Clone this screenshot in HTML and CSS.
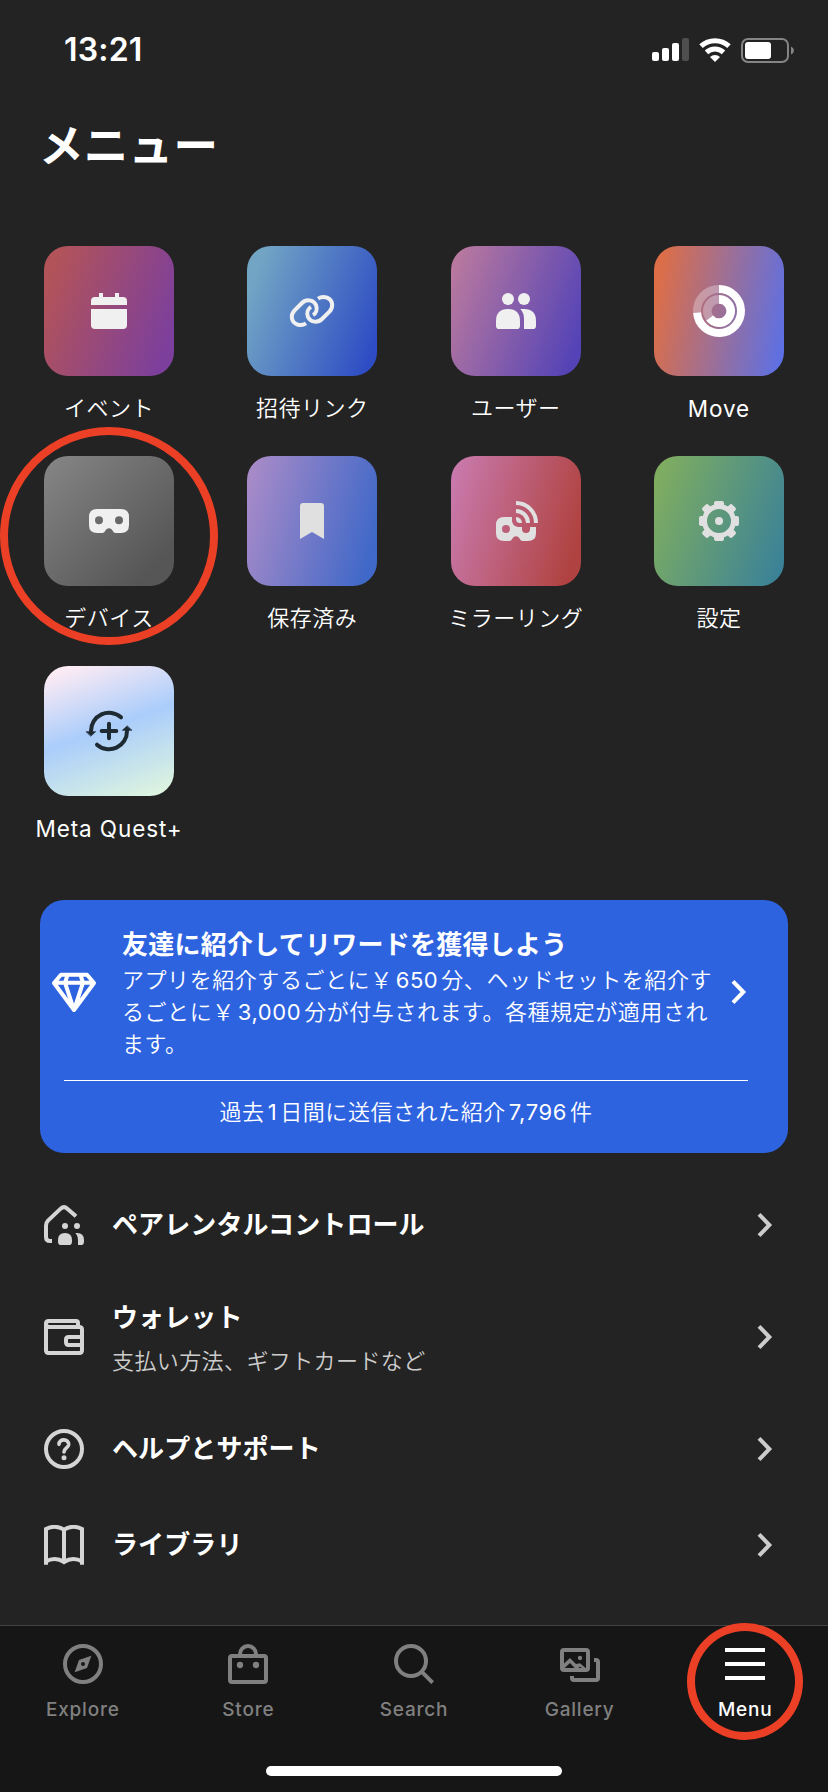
FILE: index.html
```html
<!DOCTYPE html>
<html lang="ja">
<head>
<meta charset="utf-8">
<title>メニュー</title>
<link rel="stylesheet" href="styles.css">
</head>
<body>
<div class="screen">
  <header class="status">
    <span class="time">13:21</span>
    <div class="status-icons">
      <svg width="37" height="24" viewBox="0 0 37 24" fill="#fff"><rect y="14" width="7" height="9" rx="2"/><rect x="10" y="10" width="7" height="13" rx="2"/><rect x="20" y="5" width="7" height="18" rx="2"/><rect x="30" width="7" height="23" rx="2" fill="#4f4f4f"/></svg>
      <svg width="32" height="24" viewBox="0 0 32 24" fill="none" stroke="#fff" stroke-width="5"><path d="M2 8.2A20.500 20.500 0 0 1 30 8.200"/><path d="M7.500 14.300A12.500 12.500 0 0 1 24.500 14.300"/><path d="M16 24L11 19A7.500 7.500 0 0 1 21 19Z" fill="#fff" stroke="none"/></svg>
      <svg width="53" height="25" viewBox="0 0 53 25"><rect x="1" y="1" width="46" height="23" rx="6" fill="none" stroke="#858585" stroke-width="2"/><rect x="4" y="4" width="26" height="17" rx="3" fill="#fff"/><path d="M50 8.500Q53 10 53 12.500T50 16.500Z" fill="#858585"/></svg>
    </div>
  </header>

  <h1 class="title">メニュー</h1>

  <main class="grid">
    <div class="cell"><div class="tile events"><svg viewBox="-90 -90 180 180" fill="#f0f0f0"><path d="M-54-18V-30Q-54-42-42-42H-30V-54H-18V-42H18V-54H30V-42H42Q54-42 54-30V-18ZM-54-6H54V42Q54 54 42 54H-42Q-54 54-54 42Z"/></svg></div><span class="label">イベント</span></div>
    <div class="cell"><div class="tile invite"><svg viewBox="-90 -90 180 180" fill="none" stroke="#f0f0f0" stroke-width="12"><path d="M18-37C27-43 37-43 45-40C63-33 65-12 53 1L30 24C18 36-4 35-12 18C-17 5-12-7-3-12"/><path d="M18-37C27-43 37-43 45-40C63-33 65-12 53 1L30 24C18 36-4 35-12 18C-17 5-12-7-3-12" transform="rotate(180)"/></svg></div><span class="label">招待リンク</span></div>
    <div class="cell"><div class="tile users"><svg viewBox="-90 -90 180 180" fill="#f0f0f0"><circle cx="-24" cy="-36" r="18"/><circle cx="24" cy="-36" r="18"/><path d="M-60 30Q-60-6-24-6T12 30V44Q12 54 2 54H-50Q-60 54-60 44ZM13-6H24Q60-6 60 30V44Q60 54 50 54H24V24Q24 6 13-6Z"/></svg></div><span class="label">ユーザー</span></div>
    <div class="cell"><div class="tile move"><svg viewBox="-90 -90 180 180" fill="none" stroke="#fff"><g stroke-opacity=".3"><path stroke-width="24" d="M0-66A66 66 0 0 0-65.800 5"/><path stroke-width="26" d="M0-35A35 35 0 0 0-28 21"/></g><path stroke-width="24" d="M0-66A66 66 0 1 1-65.800 5"/><path stroke-width="26" d="M0-35A35 35 0 1 1-28 21"/></svg></div><span class="label latin">Move</span></div>

    <div class="cell"><div class="tile devices"><svg viewBox="-90 -90 180 180" fill="#f0f0f0" fill-rule="evenodd"><path d="M-36-36H36Q60-36 60-12V12Q60 36 36 36H20C10 36 12 22 0 22S-10 36-20 36H-36Q-60 36-60 12V-12Q-60-36-36-36ZM-42-2a12 12 0 1 0 24 0a12 12 0 1 0-24 0ZM18-2a12 12 0 1 0 24 0a12 12 0 1 0-24 0Z"/></svg></div><span class="label">デバイス</span></div>
    <div class="cell"><div class="tile saved"><svg viewBox="-90 -90 180 180" fill="#e0e0e0"><path d="M-36-44Q-36-54-26-54H26Q36-54 36-44V54L0 33L-36 54Z"/></svg></div><span class="label">保存済み</span></div>
    <div class="cell"><div class="tile mirror"><svg viewBox="-90 -90 180 180" fill="#e0e0e0" fill-rule="evenodd"><path d="M-36-12H-12V0Q-10 16 6 18H18V24a12 12 0 0 0 24 0V18H60V36Q60 60 36 60H20C10 60 12 46 0 46S-10 60-20 60H-36Q-60 60-60 36V12Q-60-12-36-12ZM-42 24a12 12 0 1 0 24 0a12 12 0 1 0-24 0Z"/><path d="M0-12A18 18 0 0 1 18 6H9Q1 4 0-4Z"/><path d="M0-54A60 60 0 0 1 60 6M0-30A36 36 0 0 1 36 6" fill="none" stroke="#e0e0e0" stroke-width="12"/></svg></div><span class="label">ミラーリング</span></div>
    <div class="cell"><div class="tile settings"><svg viewBox="-90 -90 180 180" fill="#e0e0e0"><circle r="43.500" fill="none" stroke="#e0e0e0" stroke-width="15"/><circle r="12"/><path d="M-15-44V-54Q-15-60-9-60H9Q15-60 15-54V-44ZM-15 44V54Q-15 60-9 60H9Q15 60 15 54V44ZM-44-15H-54Q-60-15-60-9V9Q-60 15-54 15H-44ZM44-15H54Q60-15 60-9V9Q60 15 54 15H44Z"/><path transform="rotate(45)" d="M-12-44V-57Q-12-63-6-63H6Q12-63 12-57V-44ZM-12 44V57Q-12 63-6 63H6Q12 63 12 57V44ZM-44-12H-57Q-63-12-63-6V6Q-63 12-57 12H-44ZM44-12H57Q63-12 63-6V6Q63 12 57 12H44Z"/></svg></div><span class="label">設定</span></div>

    <div class="cell"><div class="tile quest"><svg viewBox="-90 -90 180 180" fill="none" stroke="#1f2b33" stroke-width="12" stroke-linecap="round"><path d="M0-22V22M-22 0H22M-54 0A54 54 0 0 1 36-41M54 0A54 54 0 0 1-36 41"/><path d="M-68 2H-40L-54 15ZM68-2H40L54-15Z" fill="#1f2b33" stroke-width="2"/></svg></div><span class="label latin">Meta Quest+</span></div>
  </main>

  <section class="banner">
    <div class="banner-top">
      <svg class="gem" viewBox="90 265 144 140" fill="none" stroke="#fff" stroke-width="12" stroke-linejoin="round"><path d="M123 282H201L222 307L162 388L102 307ZM102 306H222M143 282L135 306L162 388L189 306L181 282"/></svg>
      <div class="banner-text">
        <h2>友達に紹介してリワードを獲得しよう</h2>
        <p>アプリを紹介するごとに￥<span class="num">650</span>分、ヘッドセットを紹介す<br>るごとに￥<span class="num">3,000</span>分が付与されます。各種規定が適用され<br>ます。</p>
      </div>
      <svg class="chev" viewBox="0 0 54 84" fill="none" stroke="#fff" stroke-width="12"><path d="M9 10L40 42L9 74"/></svg>
    </div>
    <div class="banner-foot">過去<span class="num">1</span>日間に送信された紹介<span class="num">7,796</span>件</div>
  </section>

  <ul class="list">
    <li>
      <svg class="ico" viewBox="0 0 120 120" fill="none" stroke="#d5d5d5" stroke-width="12"><path d="M24 108H18Q6 108 6 96V62Q6 53 12 47L50 11Q60 2 70 11L96 34"/><g fill="#d5d5d5" stroke="none"><circle cx="63" cy="63" r="9"/><circle cx="99" cy="63" r="9"/><path d="M42 105Q42 84 63 84T84 105V110Q84 120 74 120H52Q42 120 42 110ZM94 84H99Q120 84 120 105V110Q120 120 110 120H102V107Q102 92 94 84Z"/></g></svg>
      <div class="list-text"><strong>ペアレンタルコントロール</strong></div>
      <svg class="chev" viewBox="0 0 54 84" fill="none" stroke="#ccc" stroke-width="12"><path d="M9 10L40 42L9 74"/></svg>
    </li>
    <li class="tall">
      <svg class="ico" viewBox="0 0 120 120" fill="none" stroke="#d5d5d5" stroke-width="12"><path d="M102 24V18Q102 12 96 12H14Q6 12 6 20V100Q6 108 14 108H106Q114 108 114 100V38Q114 30 106 30H16Q6 30 6 20M114 60H74Q66 60 66 68V76Q66 84 74 84H114"/></svg>
      <div class="list-text"><strong>ウォレット</strong><small>支払い方法、ギフトカードなど</small></div>
      <svg class="chev" viewBox="0 0 54 84" fill="none" stroke="#ccc" stroke-width="12"><path d="M9 10L40 42L9 74"/></svg>
    </li>
    <li>
      <svg class="ico" viewBox="0 0 120 120" fill="none" stroke="#d5d5d5" stroke-width="12"><circle cx="60" cy="60" r="54"/><path stroke-width="11" stroke-linecap="round" d="M45 46C45 28 75 28 74 47C73 57 60 57 60 69"/><circle cx="60" cy="86" r="7.500" fill="#d5d5d5" stroke="none"/></svg>
      <div class="list-text"><strong>ヘルプとサポート</strong></div>
      <svg class="chev" viewBox="0 0 54 84" fill="none" stroke="#ccc" stroke-width="12"><path d="M9 10L40 42L9 74"/></svg>
    </li>
    <li>
      <svg class="ico" viewBox="0 0 120 120" fill="none" stroke="#d5d5d5" stroke-width="12"><path d="M6 119V12Q34-2 60 14Q86-2 114 12V119M60 14V112M4 110Q34 94 60 111Q86 94 116 110"/></svg>
      <div class="list-text"><strong>ライブラリ</strong></div>
      <svg class="chev" viewBox="0 0 54 84" fill="none" stroke="#ccc" stroke-width="12"><path d="M9 10L40 42L9 74"/></svg>
    </li>
  </ul>

  <footer class="dock">
    <nav class="tabs">
      <div class="tab"><svg viewBox="0 0 120 120" fill="none" stroke="currentColor" stroke-width="12"><circle cx="60" cy="60" r="54"/><path fill="currentColor" fill-rule="evenodd" stroke="none" d="M85 35L72 72L35 85L48 48ZM54 60a6 6 0 1 0 12 0a6 6 0 1 0-12 0Z"/></svg><span>Explore</span></div>
      <div class="tab"><svg viewBox="0 0 120 120" fill="none" stroke="currentColor" stroke-width="12"><rect x="6" y="36" width="108" height="78" rx="6"/><path d="M36 34V30A24 24 0 0 1 84 30V34"/><g fill="currentColor" stroke="none"><circle cx="36" cy="63" r="9.500"/><circle cx="84" cy="63" r="9.500"/></g></svg><span>Store</span></div>
      <div class="tab"><svg viewBox="0 0 120 120" fill="none" stroke="currentColor" stroke-width="12"><circle cx="51" cy="51" r="45"/><path d="M82 82L116 116"/></svg><span>Search</span></div>
      <div class="tab"><svg viewBox="0 0 120 120" fill="none" stroke="currentColor" stroke-width="12"><rect x="6" y="18" width="78" height="60" rx="6"/><path d="M102 48H108Q114 48 114 54V102Q114 108 108 108H42Q36 108 36 102V96"/><g fill="currentColor" stroke="none"><circle cx="60" cy="42" r="6.500"/><path d="M8 62L30 42L48 60L60 58L84 78H72L61 68L54 72H44L30 57L14 72H8Z"/></g></svg><span>Gallery</span></div>
      <div class="tab active"><svg viewBox="0 0 120 120" fill="none" stroke="currentColor" stroke-width="12"><path d="M0 18H120M0 60H120M0 102H120"/></svg><span>Menu</span></div>
    </nav>
    <div class="home"></div>
  </footer>

  <div class="ring ring-device"></div>
  <div class="ring ring-menu"></div>
</div>
</body>
</html>
```
FILE: styles.css
```css
* { box-sizing: border-box; }
body {
  margin: 0;
  background: #232323;
  color: #fff;
  font-family: Inter, "Noto Sans CJK JP", sans-serif;
}
h1, h2, p, ul { margin: 0; padding: 0; }
svg { display: block; flex: none; }

.screen {
  position: relative;
  display: flex;
  flex-direction: column;
  width: 828px;
  height: 1792px;
  overflow: hidden;
  background: #232323;
}

.status {
  display: flex;
  justify-content: space-between;
  align-items: center;
  height: 98px;
  padding: 2px 34px 0 64px;
}
.time { font-size: 32px; font-weight: 600; line-height: 40px; letter-spacing: 0.200px; }
.status-icons { display: flex; align-items: center; gap: 10px; }

.title {
  height: 148px;
  padding: 18px 0 0 39px;
  font-size: 44.500px;
  line-height: 60px;
  font-weight: 700;
  letter-spacing: 0.300px;
}

.grid {
  display: grid;
  grid-template-columns: repeat(4, 130px);
  grid-auto-rows: 210px;
  justify-content: space-between;
  width: 740px;
  height: 654px;
  margin-left: 44px;
}
.cell { display: flex; flex-direction: column; align-items: center; }
.tile {
  display: flex;
  align-items: center;
  justify-content: center;
  width: 130px;
  height: 130px;
  border-radius: 24px;
}
.tile svg { width: 60px; height: 60px; }
.label {
  margin-top: 16px;
  font-size: 22px;
  line-height: 32px;
  font-weight: 350;
  letter-spacing: 0.500px;
  white-space: nowrap;
}
.latin { margin-top: 17px; font-size: 22.500px; font-weight: 400; letter-spacing: 0.900px; }
.events { background: linear-gradient(110deg, #b2535a 10%, #7c3f9c 90%); }
.invite { background: linear-gradient(110deg, #72a5c4 10%, #2e4dc4 92%); }
.users { background: linear-gradient(110deg, #b8789f 6%, #5443b6 92%); }
.move { background: linear-gradient(100deg, #dd6e47 6%, #5d70e4 96%); }
.devices { background: linear-gradient(135deg, #838383 6%, #565656 85%); }
.saved { background: linear-gradient(105deg, #a68ac8 6%, #3f68c8 92%); }
.mirror { background: linear-gradient(105deg, #c878aa 6%, #b04341 90%); }
.settings { background: linear-gradient(110deg, #7fad60 6%, #3b8297 94%); }
.quest { background: linear-gradient(160deg, #fdebf4 6%, #aacdfb 48%, #def5df 96%); }

.banner {
  width: 748px;
  height: 253px;
  margin-left: 40px;
  padding-top: 28px;
  border-radius: 24px;
  background: #2e63e0;
}
.banner-top {
  display: flex;
  align-items: center;
  height: 128px;
  padding-left: 10px;
}
.gem { width: 48px; height: 46.700px; }
.banner-text { width: 606px; margin-left: 24px; padding-top: 5px; }
.banner-text h2 {
  margin-bottom: 3px;
  font-size: 26px;
  line-height: 32px;
  font-weight: 700;
  letter-spacing: 0.250px;
  white-space: nowrap;
}
.banner-text p, .banner-foot {
  font-size: 22px;
  line-height: 32px;
  font-weight: 350;
  letter-spacing: 0.560px;
  white-space: nowrap;
}
.num { margin: 0 3px; font-weight: 400; }
.chev { width: 18px; height: 28px; }
.banner .chev { margin-left: 2px; }
.banner-foot {
  width: 684px;
  margin: 24px 0 0 24px;
  padding-top: 15px;
  border-top: 1px solid #fff;
  text-align: center;
}

.list {
  display: flex;
  flex-direction: column;
  height: 472px;
  padding-top: 24px;
  list-style: none;
}
.list li {
  display: flex;
  align-items: center;
  height: 96px;
  padding: 0 54px 0 44px;
}
.list .tall { height: 128px; }
.ico { width: 40px; height: 40px; }
.list-text { display: flex; flex-direction: column; flex: 1; gap: 11px; margin-left: 28px; }
.tall .list-text { padding-top: 4px; }
.list-text strong { font-size: 26px; line-height: 32px; font-weight: 700; letter-spacing: 0.100px; }
.list-text small { font-size: 22px; line-height: 32px; font-weight: 350; letter-spacing: 0.400px; color: #ccc; }

.dock {
  display: flex;
  flex-direction: column;
  align-items: center;
  height: 167px;
  border-top: 1px solid #424242;
  background: #161616;
}
.tabs { display: flex; width: 828px; height: 140px; padding-top: 18px; }
.tab { display: flex; flex: 1; flex-direction: column; align-items: center; color: #808080; }
.tab svg { width: 40px; height: 40px; }
.tab span { margin-top: 14px; font-size: 19px; line-height: 24px; font-weight: 500; letter-spacing: 0.800px; }
.tab.active { color: #fff; }
.home { width: 296px; height: 10px; border-radius: 5px; background: #fff; }

/* highlight rings drawn over the screen */
.ring { position: absolute; border: 8px solid #ec4026; border-radius: 50%; }
.ring-device { left: 0; top: 427px; width: 218px; height: 218px; }
.ring-menu { left: 687px; top: 1623px; width: 116px; height: 117px; }
```
